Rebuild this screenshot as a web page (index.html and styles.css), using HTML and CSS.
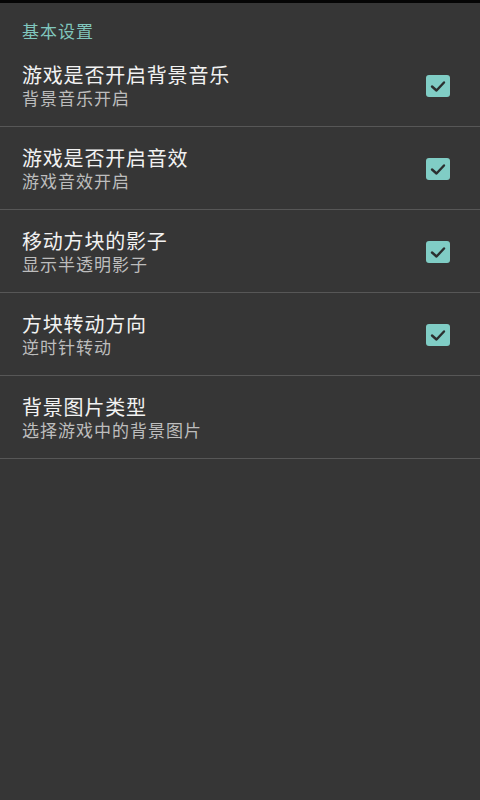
FILE: index.html
```html
<!DOCTYPE html>
<html lang="zh-CN">
<head>
    <meta charset="UTF-8">
    <meta name="viewport" content="width=device-width, initial-scale=1.0">
    <title>设置</title>
    <link rel="stylesheet" href="styles.css">
</head>
<body>
    <div class="status-bar"></div>
    <div class="settings">
        <div class="category">基本设置</div>

        <div class="pref">
            <div class="pref-text">
                <div class="pref-title">游戏是否开启背景音乐</div>
                <div class="pref-summary">背景音乐开启</div>
            </div>
            <span class="checkbox checked">
                <svg viewBox="0 0 24 22" width="24" height="22"><path d="M6 11.5 L10.5 15.5 L18 7.5" fill="none" stroke="#2b2f2f" stroke-width="2.4" stroke-linecap="round" stroke-linejoin="round"/></svg>
            </span>
        </div>

        <div class="pref">
            <div class="pref-text">
                <div class="pref-title">游戏是否开启音效</div>
                <div class="pref-summary">游戏音效开启</div>
            </div>
            <span class="checkbox checked">
                <svg viewBox="0 0 24 22" width="24" height="22"><path d="M6 11.5 L10.5 15.5 L18 7.5" fill="none" stroke="#2b2f2f" stroke-width="2.4" stroke-linecap="round" stroke-linejoin="round"/></svg>
            </span>
        </div>

        <div class="pref">
            <div class="pref-text">
                <div class="pref-title">移动方块的影子</div>
                <div class="pref-summary">显示半透明影子</div>
            </div>
            <span class="checkbox checked">
                <svg viewBox="0 0 24 22" width="24" height="22"><path d="M6 11.5 L10.5 15.5 L18 7.5" fill="none" stroke="#2b2f2f" stroke-width="2.4" stroke-linecap="round" stroke-linejoin="round"/></svg>
            </span>
        </div>

        <div class="pref">
            <div class="pref-text">
                <div class="pref-title">方块转动方向</div>
                <div class="pref-summary">逆时针转动</div>
            </div>
            <span class="checkbox checked">
                <svg viewBox="0 0 24 22" width="24" height="22"><path d="M6 11.5 L10.5 15.5 L18 7.5" fill="none" stroke="#2b2f2f" stroke-width="2.4" stroke-linecap="round" stroke-linejoin="round"/></svg>
            </span>
        </div>

        <div class="pref">
            <div class="pref-text">
                <div class="pref-title">背景图片类型</div>
                <div class="pref-summary">选择游戏中的背景图片</div>
            </div>
        </div>
    </div>
</body>
</html>
```

FILE: styles.css
```css
body {
    margin: 0;
    background-color: #363636;
    font-family: "Noto Sans CJK SC", "Noto Sans", sans-serif;
    height: 800px;
    overflow: hidden;
}

.status-bar {
    height: 3px;
    background-color: #050505;
}

.category {
    height: 41px;
    box-sizing: border-box;
    padding: 17px 0 0 22px;
    font-size: 17px;
    line-height: 21px;
    letter-spacing: 1px;
    color: #80c6bd;
}

.pref {
    display: flex;
    align-items: center;
    height: 82px;
    padding: 0 30px 0 22px;
    border-bottom: 1px solid #575757;
}

.pref-text {
    flex: 1;
}

.pref-title {
    font-size: 20px;
    line-height: 24px;
    letter-spacing: 0.8px;
    color: #f2f2f2;
}

.pref-summary {
    font-size: 17px;
    line-height: 21px;
    letter-spacing: 1px;
    color: #bdbdbd;
}

.checkbox {
    width: 24px;
    height: 22px;
    border-radius: 3px;
    background-color: #80cdc5;
    display: flex;
    margin-top: 1px;
}
```
